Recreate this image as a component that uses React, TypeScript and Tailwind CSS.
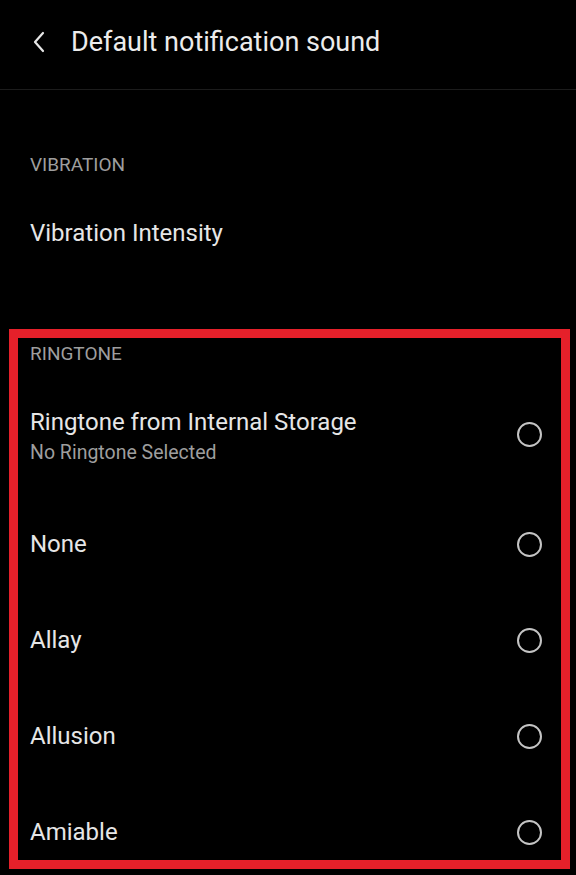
import React from "react";

function Radio() {
  return <div className="w-[25px] h-[25px] rounded-full border-2 border-[#c4c4c4] shrink-0" />;
}

function Row({ label, mt }: { label: string; mt: string }) {
  return (
    <div className={`flex items-center justify-between h-[32px] pr-[19px] ${mt}`}>
      <span className="text-[24px] leading-[32px] text-[#e6e6e6]">{label}</span>
      <Radio />
    </div>
  );
}

export default function App() {
  return (
    <div
      className="w-[576px] h-[875px] bg-black overflow-hidden"
      style={{ fontFamily: "Roboto, 'Noto Sans', sans-serif" }}
    >
      <div className="h-[90px] flex items-center border-b border-[#1c1c1c]">
        <svg width="14" height="22" viewBox="0 0 14 22" className="ml-[32px] mb-[5px]">
          <path d="M11 2 L3 11 L11 20" fill="none" stroke="#e6e6e6" strokeWidth="2.2" strokeLinecap="round" strokeLinejoin="round" />
        </svg>
        <span className="ml-[25px] mb-[4px] text-[27px] text-[#ececec] leading-none">Default notification sound</span>
      </div>

      <div className="pl-[30px] pt-[55px]">
        <div className="text-[19px] leading-[40px] text-[#9e9e9e]">VIBRATION</div>
        <div className="mt-[20px] text-[24px] leading-[56px] text-[#e6e6e6]">Vibration Intensity</div>
      </div>

      <div className="mt-[68px] ml-[9px] mr-[6px] border-[9px] border-[#e5202a] pl-[12px] pb-[12px]">
        <div className="text-[19px] leading-[32px] text-[#9e9e9e]">RINGTONE</div>
        <div className="mt-[32px] h-[64px] flex items-center justify-between pr-[19px]">
          <div className="flex flex-col pt-[7px]">
            <span className="text-[24px] leading-[30px] text-[#e6e6e6]">Ringtone from Internal Storage</span>
            <span className="text-[19.5px] leading-[32px] text-[#9e9e9e]">No Ringtone Selected</span>
          </div>
          <Radio />
        </div>
        <Row label="None" mt="mt-[62px]" />
        <Row label="Allay" mt="mt-[64px]" />
        <Row label="Allusion" mt="mt-[64px]" />
        <Row label="Amiable" mt="mt-[64px]" />
      </div>
    </div>
  );
}
